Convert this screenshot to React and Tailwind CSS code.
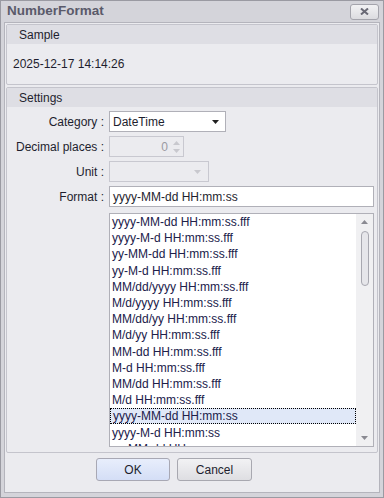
import { useState } from "react";

const formats = [
  "yyyy-MM-dd HH:mm:ss.fff",
  "yyyy-M-d HH:mm:ss.fff",
  "yy-MM-dd HH:mm:ss.fff",
  "yy-M-d HH:mm:ss.fff",
  "MM/dd/yyyy HH:mm:ss.fff",
  "M/d/yyyy HH:mm:ss.fff",
  "MM/dd/yy HH:mm:ss.fff",
  "M/d/yy HH:mm:ss.fff",
  "MM-dd HH:mm:ss.fff",
  "M-d HH:mm:ss.fff",
  "MM/dd HH:mm:ss.fff",
  "M/d HH:mm:ss.fff",
  "yyyy-MM-dd HH:mm:ss",
  "yyyy-M-d HH:mm:ss",
  "yy-MM-dd HH:mm:ss",
];

function Group({ title, children, className = "" }) {
  return (
    <div className={`rounded-[2px] border border-[#c4c4cc] bg-[#ebebef] ${className}`}>
      <div className="flex h-[19px] items-center bg-[#dedee4] pl-[12px] text-[#1e1e2e]">{title}</div>
      {children}
    </div>
  );
}

function Row({ label, children }) {
  return (
    <div className="flex items-center">
      <div className="w-[102px] pr-[5px] text-right">{label}</div>
      {children}
    </div>
  );
}

export default function App() {
  const [selected, setSelected] = useState(12);

  return (
    <div
      className="flex h-[498px] w-[384px] flex-col border border-[#9a9aa2] bg-[#d4d4da] text-[12px] text-[#1e1e2e]"
      style={{ fontFamily: '"Liberation Sans", Arial, sans-serif' }}
    >
      <div className="flex h-[21px] shrink-0 items-center justify-between pl-[6px] pr-[4px]">
        <span className="text-[13.5px] font-bold text-[#5a5a6a]">NumberFormat</span>
        <button className="flex h-[16px] w-[29px] items-center justify-center rounded-[3px] border border-[#a4a4ac] bg-gradient-to-b from-[#f2f2f4] to-[#dcdce0]">
          <svg width="9" height="7" viewBox="0 0 9 7">
            <path d="M1 0.5 L8 6.5 M8 0.5 L1 6.5" stroke="#6a6a76" strokeWidth="2" />
          </svg>
        </button>
      </div>

      <div className="mx-[3px] mb-[4px] flex flex-1 flex-col border border-[#b4b4bc] bg-[#ebebef] p-[1px]">
        <Group title="Sample" className="h-[61px]">
          <div className="pl-[6px] pt-[11px]">2025-12-17 14:14:26</div>
        </Group>

        <Group title="Settings" className="mt-[2px] h-[366px]">
          <div className="flex flex-col gap-[4px] pt-[4px]">
            <Row label="Category :">
              <div className="flex h-[21px] w-[117px] items-center justify-between border border-[#b0b0b8] bg-white pl-[3px] pr-[6px]">
                <span>DateTime</span>
                <svg width="7" height="4" viewBox="0 0 7 4">
                  <path d="M0 0 H7 L3.5 4 Z" fill="#202020" />
                </svg>
              </div>
            </Row>
            <Row label="Decimal places :">
              <div className="flex h-[21px] w-[75px] items-center justify-end border border-[#c8c8d0] bg-[#ebebef] pr-[3px] text-[#9a9aa2]">
                <span className="mr-[5px]">0</span>
                <div className="flex flex-col gap-[4px]">
                  <svg width="7" height="4" viewBox="0 0 7 4">
                    <path d="M0 4 H7 L3.5 0 Z" fill="#c8c8ce" />
                  </svg>
                  <svg width="7" height="4" viewBox="0 0 7 4">
                    <path d="M0 0 H7 L3.5 4 Z" fill="#c8c8ce" />
                  </svg>
                </div>
              </div>
            </Row>
            <Row label="Unit :">
              <div className="flex h-[21px] w-[100px] items-center justify-end border border-[#c8c8d0] bg-[#ebebef] pr-[7px]">
                <svg width="7" height="4" viewBox="0 0 7 4">
                  <path d="M0 0 H7 L3.5 4 Z" fill="#c8c8ce" />
                </svg>
              </div>
            </Row>
            <Row label="Format :">
              <div className="flex h-[21px] w-[265px] items-center border border-[#b0b0b8] bg-white pl-[3px]">
                yyyy-MM-dd HH:mm:ss
              </div>
            </Row>
            <div className="ml-[102px] mt-[2px] flex h-[234px] w-[265px] border border-[#b0b0b8] bg-white text-[#20204a]">
              <div className="flex-1 overflow-hidden">
                {formats.map((f, i) => (
                  <div
                    key={f}
                    onClick={() => setSelected(i)}
                    className={`flex h-[16.2px] items-center pl-[2px] ${
                      i === selected ? "border border-dotted border-black bg-[#e0e8f8] pl-[1px]" : ""
                    }`}
                  >
                    {f}
                  </div>
                ))}
              </div>
              <div className="flex w-[17px] flex-col items-center bg-[#f0f0f2] pt-[6px]">
                <svg width="7" height="4" viewBox="0 0 7 4">
                  <path d="M0 4 H7 L3.5 0 Z" fill="#8a8a92" />
                </svg>
                <div className="mt-[7px] h-[55px] w-[8px] rounded-[4px] border border-[#a8a8b0] bg-[#e6e6ea]" />
                <div className="flex-1" />
                <svg className="mb-[6px]" width="7" height="4" viewBox="0 0 7 4">
                  <path d="M0 0 H7 L3.5 4 Z" fill="#8a8a92" />
                </svg>
              </div>
            </div>
          </div>
        </Group>

        <div className="flex flex-1 items-start gap-[7px] pl-[90px] pt-[5px]">
          <button className="h-[23px] w-[74px] rounded-[3px] border border-[#a8a8b4] bg-gradient-to-b from-[#e8eefc] to-[#d4def6]">
            OK
          </button>
          <button className="h-[23px] w-[75px] rounded-[3px] border border-[#a8a8b0] bg-gradient-to-b from-[#f2f2f4] to-[#dedee2]">
            Cancel
          </button>
        </div>
      </div>
    </div>
  );
}
